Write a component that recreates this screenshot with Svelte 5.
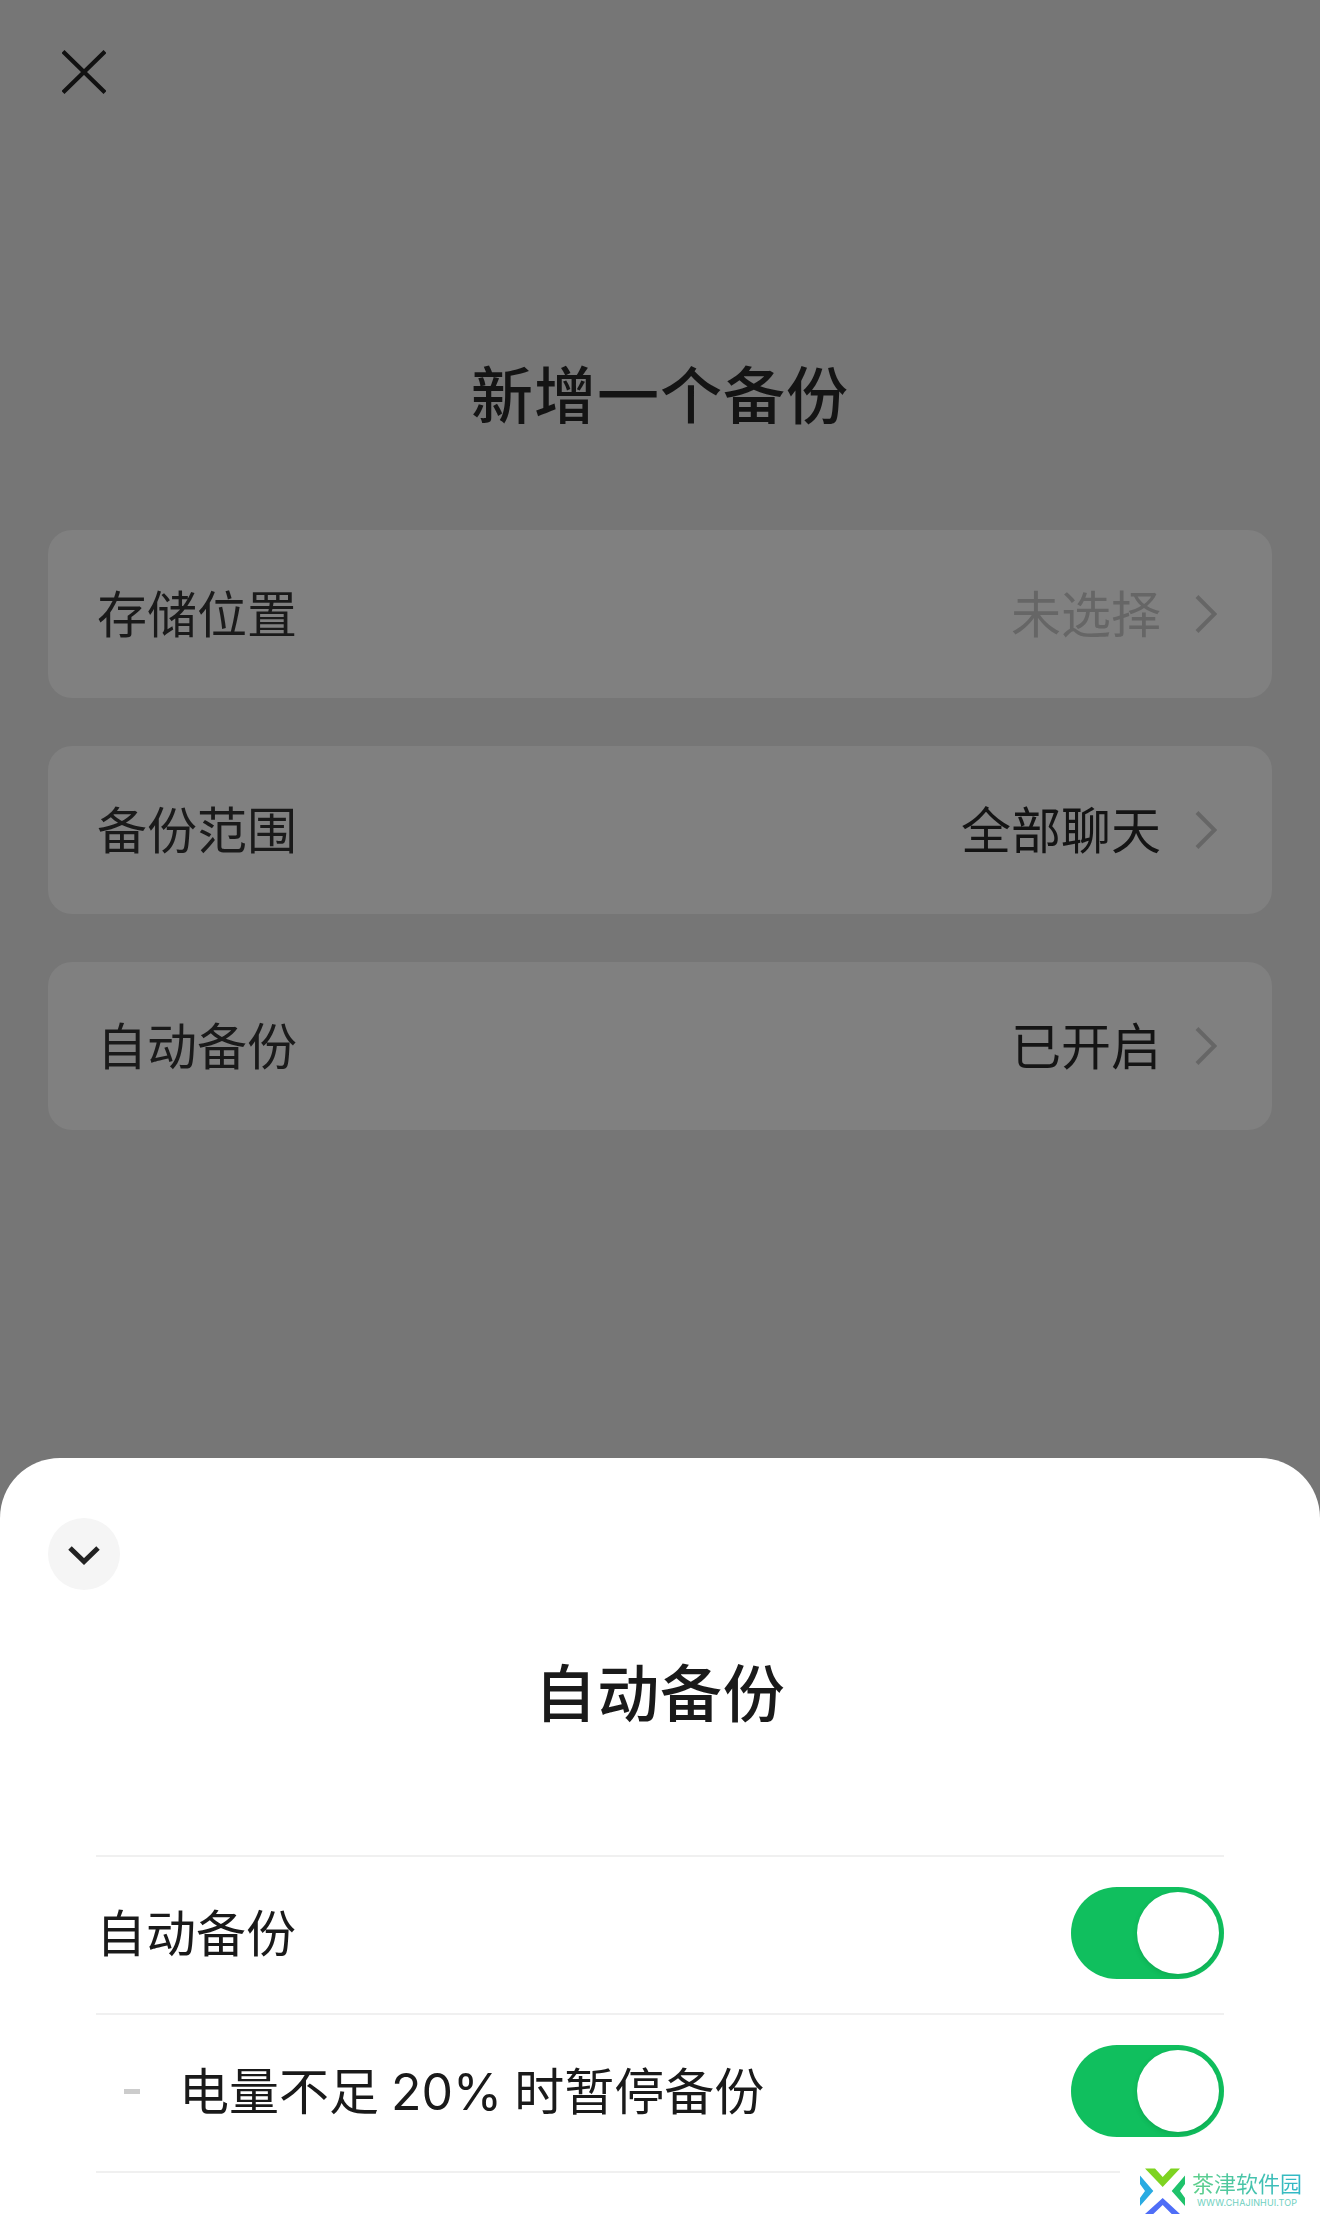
<script lang="ts">
  const settings = [
    { label: '存储位置', value: '未选择', muted: true },
    { label: '备份范围', value: '全部聊天', muted: false },
    { label: '自动备份', value: '已开启', muted: false }
  ]
</script>

<div class="page">
  <div class="backdrop">
    <button class="close" aria-label="关闭">
      <svg viewBox="0 0 44 44" width="44" height="44" fill="none" stroke="#111" stroke-width="4.2">
        <path d="M1 1.5 43 42.5M43 1.5 1 42.5" />
      </svg>
    </button>

    <h1 class="page-title">新增一个备份</h1>

    <div class="cards">
      {#each settings as item}
        <div class="card">
          <span class="label">{item.label}</span>
          <span class="value" class:muted={item.muted}>{item.value}</span>
          <svg class="chevron" viewBox="0 0 22 38" width="22" height="38" fill="none" stroke="#666" stroke-width="4">
            <path d="M2 1.500 19.500 19 2 36.500" />
          </svg>
        </div>
      {/each}
    </div>
  </div>

  <section class="sheet">
    <button class="collapse" aria-label="收起">
      <svg viewBox="0 0 32 20" width="32" height="20" fill="none" stroke="#222" stroke-width="5">
        <path d="M2 3 16 16.500 30 3" />
      </svg>
    </button>

    <h2 class="sheet-title">自动备份</h2>

    <div class="rows">
      <div class="row">
        <span class="label">自动备份</span>
        <span class="toggle"><span class="knob"></span></span>
      </div>
      <div class="row sub">
        <span class="dash"></span>
        <span class="label">电量不足 20% 时暂停备份</span>
        <span class="toggle"><span class="knob"></span></span>
      </div>
    </div>
  </section>

  <div class="watermark">
    <svg class="logo" viewBox="0 0 45 46" width="45" height="46">
      <path d="M5 .5H15L22.700 9 30.700 .5H40L22.700 19Z" fill="#7ed321" />
      <path d="M0 7.500 13.300 23 0 38V30L5 23 0 16Z" fill="#29abe2" />
      <path d="M45 7.500 31.700 23 45 38V30L40 23 45 16Z" fill="#1fc26b" />
      <path d="M22.700 30 40 46H31.700L22.700 37 13.300 46H5Z" fill="#4f6ef7" />
    </svg>
    <div class="brand">
      <span class="brand-name">茶津软件园</span>
      <span class="brand-url">WWW.CHAJINHUI.TOP</span>
    </div>
  </div>
</div>

<style>
  :global(body) {
    margin: 0;
    background: #767676;
  }

  .page {
    position: relative;
    display: flex;
    flex-direction: column;
    height: 2216px;
    overflow: hidden;
    font-family: Inter, "Noto Sans CJK SC", sans-serif;
  }

  button {
    display: flex;
    align-items: center;
    justify-content: center;
    padding: 0;
    border: 0;
    background: none;
  }

  .backdrop {
    flex: 1;
    padding: 50px 48px 0;
  }

  .close {
    margin-left: 14px;
  }

  .page-title {
    margin: 258px 0 0;
    font-size: 62px;
    line-height: 90px;
    font-weight: 500;
    letter-spacing: 1px;
    text-align: center;
    color: #141414;
  }

  .cards {
    display: flex;
    flex-direction: column;
    gap: 48px;
    margin-top: 88px;
  }

  .card {
    display: flex;
    align-items: center;
    height: 168px;
    padding: 0 52px 0 49px;
    border-radius: 24px;
    background: #808080;
  }

  .label {
    margin-top: 2px;
    font-size: 50px;
    line-height: 72px;
    color: #1a1a1a;
  }

  .row .label {
    margin-top: 0;
    margin-bottom: 2px;
  }

  .sub .label {
    word-spacing: -2px;
  }

  .value {
    margin-top: 2px;
    margin-left: auto;
    font-size: 50px;
    line-height: 72px;
    color: #141414;
  }

  .value.muted {
    color: #666;
  }

  .chevron {
    margin-left: 34px;
    margin-right: 3px;
  }

  .sheet {
    height: 758px;
    box-sizing: border-box;
    padding: 60px 96px 0;
    border-radius: 60px 60px 0 0;
    background: #fff;
  }

  .collapse {
    width: 72px;
    height: 72px;
    margin-left: -48px;
    padding-top: 2px;
    border-radius: 50%;
    background: #f5f5f5;
  }

  .sheet-title {
    margin: 60px 0 0;
    font-size: 62px;
    line-height: 90px;
    font-weight: 500;
    letter-spacing: 0.8px;
    text-align: center;
    color: #1a1a1a;
  }

  .rows {
    margin-top: 115px;
    border-top: 2px solid #f0f0f0;
  }

  .row {
    display: flex;
    align-items: center;
    height: 156px;
    border-bottom: 2px solid #f0f0f0;
  }

  .dash {
    width: 16px;
    height: 5px;
    margin: 0 39px 4px 28px;
    background: #ccc;
  }

  .toggle {
    display: flex;
    justify-content: flex-end;
    align-items: center;
    box-sizing: border-box;
    width: 153px;
    height: 92px;
    margin-left: auto;
    margin-bottom: 4px;
    padding-right: 5px;
    border-radius: 46px;
    background: #10bf5e;
  }

  .knob {
    width: 82px;
    height: 82px;
    border-radius: 50%;
    background: #fff;
    box-shadow: 0 2px 5px rgba(0, 70, 30, 0.18);
  }

  .watermark {
    position: absolute;
    right: 0;
    bottom: 0;
    display: flex;
    align-items: center;
    gap: 7px;
    box-sizing: border-box;
    width: 200px;
    height: 58px;
    padding: 8px 0 0 20px;
    background: #fff;
  }

  .brand {
    display: flex;
    flex-direction: column;
    align-items: center;
    margin-top: -4px;
  }

  .brand-name {
    font-size: 22px;
    line-height: 26px;
    background: linear-gradient(90deg, #5fd08a, #2fb7c9);
    background-clip: text;
    -webkit-background-clip: text;
    color: transparent;
  }

  .brand-url {
    font-size: 9px;
    line-height: 11px;
    letter-spacing: 0.1px;
    color: #6fd0c0;
  }
</style>
